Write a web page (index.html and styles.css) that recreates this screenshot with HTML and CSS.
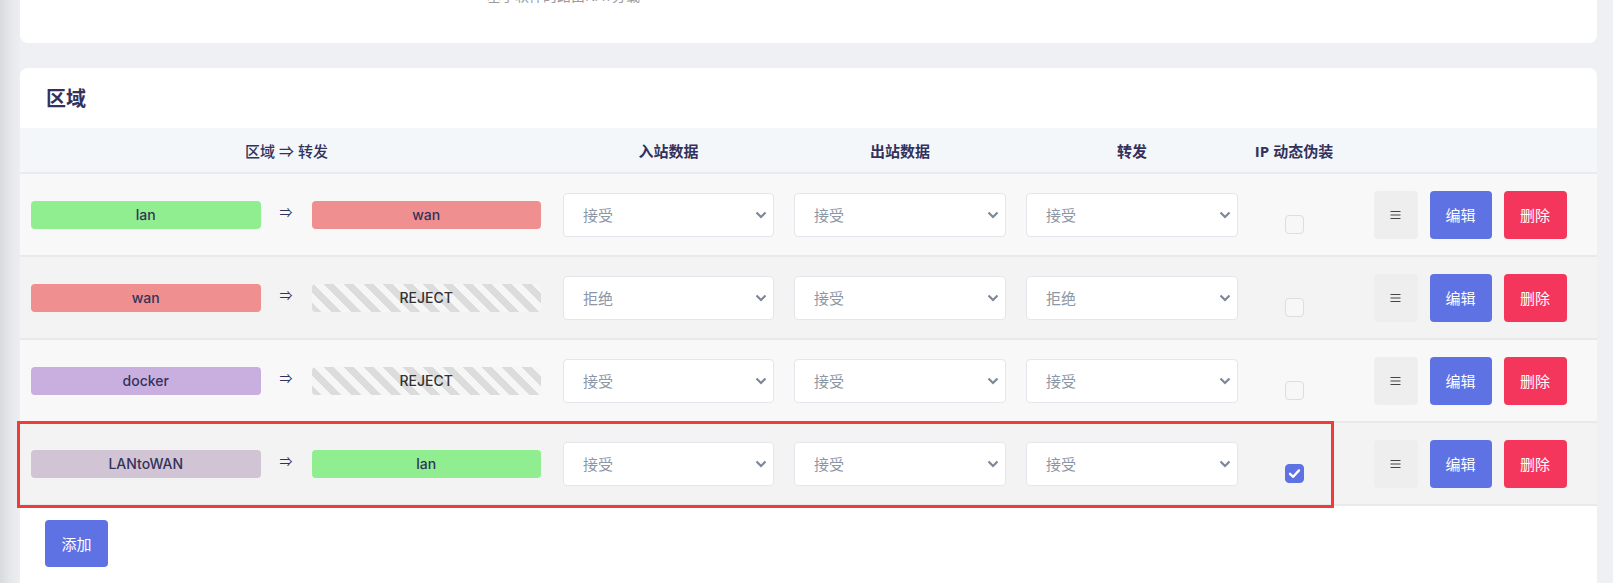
FILE: index.html
```html
<!DOCTYPE html>
<html lang="zh-CN">
<head>
    <meta charset="UTF-8">
    <meta name="viewport" content="width=device-width, initial-scale=1.0">
    <title>防火墙 - 区域</title>
    <link rel="stylesheet" href="styles.css">
</head>
<body>
    <div class="page">
        <div class="card card-top">
            <div class="field-desc">基于软件的路由NAT分载</div>
        </div>

        <div class="card zones">
            <h3 class="zones-title">区域</h3>

            <div class="zone-table">
                <div class="zone-row head">
                    <div class="head-first">区域 ⇒ 转发</div>
                    <div>入站数据</div>
                    <div>出站数据</div>
                    <div>转发</div>
                    <div>IP 动态伪装</div>
                    <div></div>
                </div>

                <div class="zone-row">
                    <div class="col-zone">
                        <span class="zone-badge lan">lan</span>
                        <span class="zone-arrow">⇒</span>
                        <span class="zone-badge wan">wan</span>
                    </div>
                    <div class="col-select"><div class="select-wrap"><select><option>接受</option></select><svg class="chev" width="12" height="8" viewBox="0 0 12 8"><path d="M1.5 1.5L6 6l4.5-4.5"/></svg></div></div>
                    <div class="col-select"><div class="select-wrap"><select><option>接受</option></select><svg class="chev" width="12" height="8" viewBox="0 0 12 8"><path d="M1.5 1.5L6 6l4.5-4.5"/></svg></div></div>
                    <div class="col-select"><div class="select-wrap"><select><option>接受</option></select><svg class="chev" width="12" height="8" viewBox="0 0 12 8"><path d="M1.5 1.5L6 6l4.5-4.5"/></svg></div></div>
                    <div class="col-check"><span class="check"></span></div>
                    <div class="col-actions">
                        <button class="btn btn-sort"><svg width="11" height="10" viewBox="0 0 11 10"><path d="M0.5 1.5h10M0.5 5h10M0.5 8.5h10"/></svg></button>
                        <button class="btn btn-primary">编辑</button>
                        <button class="btn btn-danger">删除</button>
                    </div>
                </div>

                <div class="zone-row">
                    <div class="col-zone">
                        <span class="zone-badge wan">wan</span>
                        <span class="zone-arrow">⇒</span>
                        <span class="zone-badge reject">REJECT</span>
                    </div>
                    <div class="col-select"><div class="select-wrap"><select><option>拒绝</option></select><svg class="chev" width="12" height="8" viewBox="0 0 12 8"><path d="M1.5 1.5L6 6l4.5-4.5"/></svg></div></div>
                    <div class="col-select"><div class="select-wrap"><select><option>接受</option></select><svg class="chev" width="12" height="8" viewBox="0 0 12 8"><path d="M1.5 1.5L6 6l4.5-4.5"/></svg></div></div>
                    <div class="col-select"><div class="select-wrap"><select><option>拒绝</option></select><svg class="chev" width="12" height="8" viewBox="0 0 12 8"><path d="M1.5 1.5L6 6l4.5-4.5"/></svg></div></div>
                    <div class="col-check"><span class="check"></span></div>
                    <div class="col-actions">
                        <button class="btn btn-sort"><svg width="11" height="10" viewBox="0 0 11 10"><path d="M0.5 1.5h10M0.5 5h10M0.5 8.5h10"/></svg></button>
                        <button class="btn btn-primary">编辑</button>
                        <button class="btn btn-danger">删除</button>
                    </div>
                </div>

                <div class="zone-row">
                    <div class="col-zone">
                        <span class="zone-badge docker">docker</span>
                        <span class="zone-arrow">⇒</span>
                        <span class="zone-badge reject">REJECT</span>
                    </div>
                    <div class="col-select"><div class="select-wrap"><select><option>接受</option></select><svg class="chev" width="12" height="8" viewBox="0 0 12 8"><path d="M1.5 1.5L6 6l4.5-4.5"/></svg></div></div>
                    <div class="col-select"><div class="select-wrap"><select><option>接受</option></select><svg class="chev" width="12" height="8" viewBox="0 0 12 8"><path d="M1.5 1.5L6 6l4.5-4.5"/></svg></div></div>
                    <div class="col-select"><div class="select-wrap"><select><option>接受</option></select><svg class="chev" width="12" height="8" viewBox="0 0 12 8"><path d="M1.5 1.5L6 6l4.5-4.5"/></svg></div></div>
                    <div class="col-check"><span class="check"></span></div>
                    <div class="col-actions">
                        <button class="btn btn-sort"><svg width="11" height="10" viewBox="0 0 11 10"><path d="M0.5 1.5h10M0.5 5h10M0.5 8.5h10"/></svg></button>
                        <button class="btn btn-primary">编辑</button>
                        <button class="btn btn-danger">删除</button>
                    </div>
                </div>

                <div class="zone-row marked">
                    <div class="col-zone">
                        <span class="zone-badge lantowan">LANtoWAN</span>
                        <span class="zone-arrow">⇒</span>
                        <span class="zone-badge lan">lan</span>
                    </div>
                    <div class="col-select"><div class="select-wrap"><select><option>接受</option></select><svg class="chev" width="12" height="8" viewBox="0 0 12 8"><path d="M1.5 1.5L6 6l4.5-4.5"/></svg></div></div>
                    <div class="col-select"><div class="select-wrap"><select><option>接受</option></select><svg class="chev" width="12" height="8" viewBox="0 0 12 8"><path d="M1.5 1.5L6 6l4.5-4.5"/></svg></div></div>
                    <div class="col-select"><div class="select-wrap"><select><option>接受</option></select><svg class="chev" width="12" height="8" viewBox="0 0 12 8"><path d="M1.5 1.5L6 6l4.5-4.5"/></svg></div></div>
                    <div class="col-check"><span class="check on"><svg width="13" height="11" viewBox="0 0 13 11"><path d="M2 5.8l3.2 3L11 2.4"/></svg></span></div>
                    <div class="col-actions">
                        <button class="btn btn-sort"><svg width="11" height="10" viewBox="0 0 11 10"><path d="M0.5 1.5h10M0.5 5h10M0.5 8.5h10"/></svg></button>
                        <button class="btn btn-primary">编辑</button>
                        <button class="btn btn-danger">删除</button>
                    </div>
                    <!-- annotation box drawn over the last row -->
                    <div class="highlight"></div>
                </div>
            </div>

            <div class="add-row">
                <button class="btn btn-primary btn-add">添加</button>
            </div>
        </div>
    </div>
</body>
</html>
```

FILE: styles.css
```css
html, body {
    height: 100%;
}
body {
    margin: 0;
    overflow: hidden;
    font-family: "Open Sans", "Noto Sans CJK SC", sans-serif;
    color: #32325d;
    background: linear-gradient(to right, #d9dadd 0, #e6e7ea 10px, #eceef1 20px, #eef0f3 20px);
}
.page {
    padding: 0 16px 0 20px;
}
.card {
    background: #fff;
    border-radius: 8px;
}
.card-top {
    margin-top: -40px;
    padding: 26px 0 37px 467px;
}
.field-desc {
    font-size: 14px;
    line-height: 20px;
    color: #9a9a9a;
}
.zones {
    margin-top: 25px;
    padding-bottom: 40px;
}
.zones-title {
    margin: 0;
    padding: 19px 26px 17px;
    font-size: 20px;
    line-height: 24px;
    font-weight: bold;
    color: #32325d;
}
.zone-row {
    position: relative;
    display: grid;
    grid-template-columns: 533px 231px 232px 232px 92px 1fr;
    align-items: center;
    min-height: 81px;
    border-bottom: 2px solid #e9e9e9;
    background: #f8f8f8;
}
.zone-row:nth-child(odd) {
    background: #f3f3f3;
}
.zone-row.head {
    min-height: 44px;
    background: #f4f7fa;
    border-bottom: 2px solid #e9ecef;
    font-size: 15px;
    font-weight: bold;
    text-align: center;
}
.zone-row.head .head-first {
    font-weight: 500;
}
.col-zone {
    display: grid;
    grid-template-columns: 1fr 51px 1fr;
    align-items: center;
    padding: 0 12px 0 11px;
}
.zone-badge {
    display: block;
    height: 28px;
    line-height: 28px;
    border-radius: 4px;
    text-align: center;
    font-family: Inter, "Noto Sans", sans-serif;
    font-size: 14px;
    font-weight: 500;
    color: #33335a;
}
.zone-badge.lan { background: #90ee90; }
.zone-badge.wan { background: #f08f8f; }
.zone-badge.docker { background: #c9afe0; }
.zone-badge.lantowan { background: #d1c4d5; }
.zone-badge.reject {
    color: #333;
    background: repeating-linear-gradient(45deg, #dcdcdc 0, #dcdcdc 7px, #f6f6f6 7px, #f6f6f6 14px);
}
.zone-arrow {
    text-align: center;
    font-size: 13px;
    margin-bottom: 6px;
}
.col-select {
    padding: 0 10px;
}
.select-wrap {
    position: relative;
}
.select-wrap select {
    display: block;
    width: 100%;
    height: 44px;
    padding: 0 30px 0 19px;
    border: 1px solid #e3e6ea;
    border-radius: 4px;
    background: #fff;
    font-family: inherit;
    font-size: 15px;
    color: #8c96a5;
    appearance: none;
    -webkit-appearance: none;
}
.chev {
    position: absolute;
    right: 7px;
    top: 18px;
    fill: none;
    stroke: #7d8797;
    stroke-width: 2.2;
}
.col-check {
    display: flex;
    justify-content: center;
}
.check {
    display: flex;
    align-items: center;
    justify-content: center;
    box-sizing: border-box;
    width: 19px;
    height: 19px;
    margin-top: 19px;
    border: 1px solid #dedede;
    border-radius: 4px;
    background: #f7f7f7;
}
.check.on {
    background: #5e72e4;
    border-color: #5e72e4;
}
.check svg {
    fill: none;
    stroke: #fff;
    stroke-width: 2.4;
    stroke-linecap: round;
    stroke-linejoin: round;
}
.col-actions {
    display: flex;
    justify-content: center;
    gap: 12px;
    padding-left: 3px;
}
.btn {
    height: 48px;
    border: none;
    border-radius: 4px;
    font-family: inherit;
    font-size: 15px;
    color: #fff;
    cursor: pointer;
}
.btn-sort {
    width: 44px;
    background: #eeeeee;
    display: flex;
    align-items: center;
    justify-content: center;
}
.btn-sort svg {
    stroke: #444;
    stroke-width: 1.1;
}
.btn-primary {
    width: 62px;
    background: #5e72e4;
}
.btn-danger {
    width: 63px;
    background: #f5365c;
}
.highlight {
    position: absolute;
    left: -3px;
    top: -2px;
    width: 1317px;
    height: 87px;
    box-sizing: border-box;
    border: 3px solid #f03b3b;
    pointer-events: none;
}
.add-row {
    padding: 14px 25px 0;
}
.btn-add {
    width: 63px;
    height: 47px;
}
```
